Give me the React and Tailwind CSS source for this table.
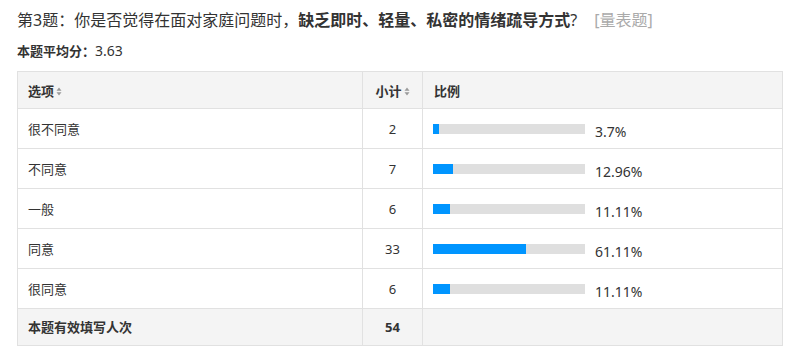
const ROWS = [
  { label: '很不同意', count: 2, pct: 3.7, text: '3.7%' },
  { label: '不同意', count: 7, pct: 12.96, text: '12.96%' },
  { label: '一般', count: 6, pct: 11.11, text: '11.11%' },
  { label: '同意', count: 33, pct: 61.11, text: '61.11%' },
  { label: '很同意', count: 6, pct: 11.11, text: '11.11%' },
];

function SortIcon() {
  return (
    <svg width="6" height="9" viewBox="0 0 6 9" className="ml-[2px] inline-block" aria-hidden="true">
      <path d="M3 0.5 L5.5 3.8 L0.5 3.8 Z" fill="#9a9a9a" />
      <path d="M3 8.5 L5.5 5.2 L0.5 5.2 Z" fill="#9a9a9a" />
    </svg>
  );
}

export default function App() {
  return (
    <div
      className="w-[793px] h-[354px] bg-white px-[17px] pt-[8px] text-[#333]"
      style={{ fontFamily: '"Noto Sans", "Noto Sans CJK SC", sans-serif' }}
    >
      {/* Question title */}
      <div className="flex items-center text-[16px] leading-[24px] whitespace-nowrap">
        <span>第3题：你是否觉得在面对家庭问题时，</span>
        <span className="font-bold">缺乏即时、轻量、私密的情绪疏导方式</span>
        <span>?</span>
        <span className="ml-[17px] text-[#aaa]">[量表题]</span>
      </div>

      <div className="mt-[9px] flex items-baseline text-[13px] leading-[20px]">
        <span className="font-bold">本题平均分：</span>
        <span className="text-[14px]">3.63</span>
      </div>

      {/* Result table */}
      <div className="mt-[10px] w-[766px] border border-[#e1e1e1] text-[13px]">
        <div className="grid grid-cols-[344px_60px_1fr] h-[37px] bg-[#f4f4f4] border-b border-[#e1e1e1] font-bold">
          <div className="flex items-center pl-[10px] pt-[3px]">
            选项<SortIcon />
          </div>
          <div className="flex items-center justify-center pt-[3px] border-l border-[#e1e1e1]">
            小计<SortIcon />
          </div>
          <div className="flex items-center pl-[11px] pt-[3px] border-l border-[#e1e1e1]">比例</div>
        </div>

        {ROWS.map((r) => (
          <div key={r.label} className="grid grid-cols-[344px_60px_1fr] h-[40px] border-b border-[#e1e1e1]">
            <div className="flex items-center pl-[10px] pt-[2px]">{r.label}</div>
            <div className="flex items-center justify-center pt-[2px] border-l border-[#e1e1e1]">{r.count}</div>
            <div className="flex items-center pl-[10px] border-l border-[#e1e1e1]">
              <div className="h-[10px] w-[152px] bg-[#dfdfdf]">
                <div className="h-full bg-[#0095ff]" style={{ width: `${r.pct}%` }} />
              </div>
              <span className="ml-[10px] pt-[6px] text-[14px]">{r.text}</span>
            </div>
          </div>
        ))}

        <div className="grid grid-cols-[344px_60px_1fr] h-[36px] bg-[#f4f4f4] font-bold">
          <div className="flex items-center pl-[10px] pt-[2px]">本题有效填写人次</div>
          <div className="flex items-center justify-center pt-[2px] border-l border-[#e1e1e1]">54</div>
          <div className="border-l border-[#e1e1e1]" />
        </div>
      </div>
    </div>
  );
}
